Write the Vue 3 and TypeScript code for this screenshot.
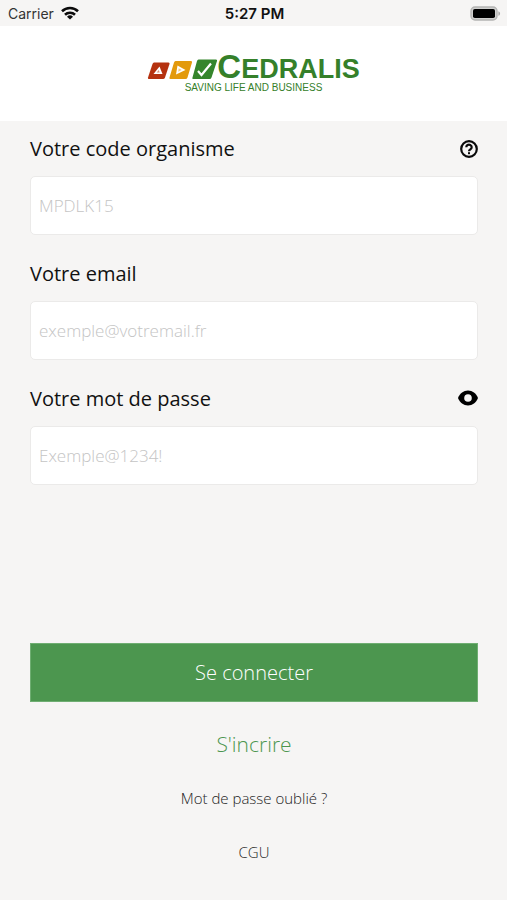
<script setup lang="ts">
import { reactive, ref } from 'vue'

const form = reactive({ code: '', email: '', password: '' })
const showPassword = ref(false)
const showHelp = ref(false)

function togglePassword(): void {
  showPassword.value = !showPassword.value
}
</script>

<template>
  <div class="screen">
    <div class="status">
      <div class="carrier">
        <span>Carrier</span>
        <svg width="18" height="14" viewBox="0 0 18 14" aria-hidden="true">
          <g fill="none" stroke="#0b0b0b" stroke-width="2.6">
            <path d="M1 5.2a11.6 11.6 0 0 1 16 0" />
            <path d="M4 8.7a7.2 7.2 0 0 1 10 0" />
          </g>
          <path d="M9 13.6 6 10.7a4.3 4.3 0 0 1 6 0z" fill="#0b0b0b" />
        </svg>
      </div>
      <span class="time">5:27 PM</span>
      <svg class="battery" width="31" height="15" viewBox="0 0 31 15" aria-hidden="true">
        <rect x="1" y="1" width="26" height="13" rx="4" fill="#d0d0cf" stroke="#b4b4b3" stroke-width="1.4" />
        <rect x="3" y="3" width="22" height="9" rx="1.8" fill="#000" />
        <path d="M28.4 5.2c2.2.8 2.2 3.8 0 4.6z" fill="#a9a9a8" />
      </svg>
    </div>

    <header class="header">
      <div class="logo">
        <div class="brand">
          <svg width="70" height="22" viewBox="0 0 70 22" aria-hidden="true">
            <path d="M7 3.500H21.500q1.500 0 1 1.500L18 18.500q-.5 1.500-2 1.500H2Q.5 20 1 18.500L5.500 5Q6 3.500 7 3.500z" fill="#b5310f" />
            <path d="M12.500 7.500 15.500 15H6.500z" fill="#fff" />
            <path d="M11.700 11 12.700 13.500H9.700z" fill="#d9907a" />
            <path d="M28.500 2H44q1.500 0 1 1.500L40.500 18.500q-.5 1.500-2 1.500H23.500Q22 20 22.500 18.500L27 3.500q.5-1.500 1.500-1.500z" fill="#e39a0c" />
            <path d="M30.500 6.500 38.500 11 29 15.500z" fill="#fff" />
            <path d="M31.700 9.300 34.700 11 31.200 12.800z" fill="#f1ca80" />
            <path d="M51.500 .5H69q1.500 0 1 1.500L64.500 18.500q-.5 1.500-2 1.500H46.500Q45 20 45.500 18.500L50 2Q50.500 .5 51.500 .5z" fill="#35852c" />
            <path d="M51 12 54.500 16 64 4.500" fill="none" stroke="#fff" stroke-width="2.200" />
          </svg>
          <span class="name"><span class="initial">C</span>EDRALIS</span>
        </div>
        <span class="tagline">SAVING LIFE AND BUSINESS</span>
      </div>
    </header>

    <form class="form" @submit.prevent>
      <div class="field">
        <div class="row">
          <label for="code">Votre code organisme</label>
          <button type="button" class="icon" aria-label="Aide" :aria-pressed="showHelp" @click="showHelp = !showHelp">
            <svg width="20" height="20" viewBox="0 0 20 20">
              <circle cx="11" cy="11" r="7.800" fill="none" stroke="#0a0a0a" stroke-width="2.200" />
              <path d="M8.300 9.200a2.700 2.500 0 1 1 4.200 2c-1 .7-1.500 1-1.500 2.100" fill="none" stroke="#0a0a0a" stroke-width="2.200" />
              <rect x="10" y="14.200" width="2" height="2" fill="#0a0a0a" />
            </svg>
          </button>
        </div>
        <input id="code" v-model="form.code" type="text" placeholder="MPDLK15" />
      </div>

      <div class="field">
        <div class="row"><label for="email">Votre email</label></div>
        <input id="email" v-model="form.email" type="email" placeholder="exemple@votremail.fr" />
      </div>

      <div class="field">
        <div class="row">
          <label for="password">Votre mot de passe</label>
          <button type="button" class="icon" aria-label="Afficher le mot de passe" :aria-pressed="showPassword" @click="togglePassword">
            <svg width="20" height="20" viewBox="0 0 20 20">
              <path d="M0 10C2 5.300 5.500 2.500 10 2.500S18 5.300 20 10C18 14.700 14.500 17.500 10 17.500S2 14.700 0 10z" fill="#000" />
              <circle cx="10" cy="10" r="3.800" fill="#f6f5f4" />
            </svg>
          </button>
        </div>
        <input id="password" v-model="form.password" :type="showPassword ? 'text' : 'password'" placeholder="Exemple@1234!" />
      </div>

      <div class="actions">
        <button type="submit" class="submit">Se connecter</button>
        <a href="#inscription" class="register">S'incrire</a>
        <a href="#oubli" class="link">Mot de passe oublié ?</a>
        <a href="#cgu" class="link">CGU</a>
      </div>
    </form>
  </div>
</template>

<style>
body {
  background: #f6f5f4;
}
</style>

<style scoped>
.screen {
  display: flex;
  flex-direction: column;
  box-sizing: border-box;
  min-height: 100vh;
  background: #f6f5f4;
  color: #111;
  font-family: "Open Sans", "Noto Sans", sans-serif;
}

.status {
  display: grid;
  grid-template-columns: 1fr auto 1fr;
  align-items: center;
  height: 26px;
  padding: 0 6px 0 8px;
  font-family: Inter, "Liberation Sans", sans-serif;
  font-size: 14px;
}

.carrier {
  display: flex;
  align-items: center;
  gap: 7px;
  color: #333;
}

.time {
  font-size: 15px;
  font-weight: 600;
}

.battery {
  justify-self: end;
}

.header {
  display: flex;
  justify-content: center;
  box-sizing: border-box;
  height: 95px;
  padding-top: 28px;
  background: #fff;
}

.logo {
  display: flex;
  flex-direction: column;
  align-items: center;
  font-family: "Liberation Sans", Arial, sans-serif;
  color: #35802a;
}

.brand {
  display: flex;
  align-items: flex-end;
  height: 27px;
}

.name {
  font-size: 27px;
  font-weight: 700;
  line-height: 23px;
}

.initial {
  font-size: 33px;
}

.tagline {
  font-size: 10px;
  line-height: 14px;
}

.form {
  display: flex;
  flex: 1;
  flex-direction: column;
  gap: 24px;
  padding: 13px 29px 34px 30px;
}

.field {
  display: flex;
  flex-direction: column;
  gap: 14px;
}

.row {
  display: flex;
  align-items: center;
  justify-content: space-between;
  height: 28px;
  font-size: 20px;
}

.icon {
  display: flex;
  padding: 0;
  border: 0;
  background: none;
  cursor: pointer;
}

input {
  box-sizing: border-box;
  width: 100%;
  height: 59px;
  padding: 0 8px;
  border: 1px solid #ebeae9;
  border-radius: 5px;
  background: #fff;
  color: #111;
  font: 300 17px "Open Sans", "Noto Sans", sans-serif;
}

input::placeholder {
  color: #c4c4c4;
  opacity: 1;
}

.actions {
  display: flex;
  flex-direction: column;
  align-items: center;
  margin-top: auto;
}

.submit {
  width: 100%;
  height: 59px;
  margin-bottom: 28px;
  border: 1px solid #6fae72;
  background: #4c964f;
  color: #fff;
  font: 300 20px "Open Sans", "Noto Sans", sans-serif;
  cursor: pointer;
}

a {
  text-decoration: none;
}

.register {
  color: #4c964f;
  font-size: 21px;
  font-weight: 300;
  line-height: 28px;
}

.link {
  margin-top: 26px;
  color: #222;
  font-size: 15px;
  font-weight: 300;
  line-height: 28px;
}
</style>
